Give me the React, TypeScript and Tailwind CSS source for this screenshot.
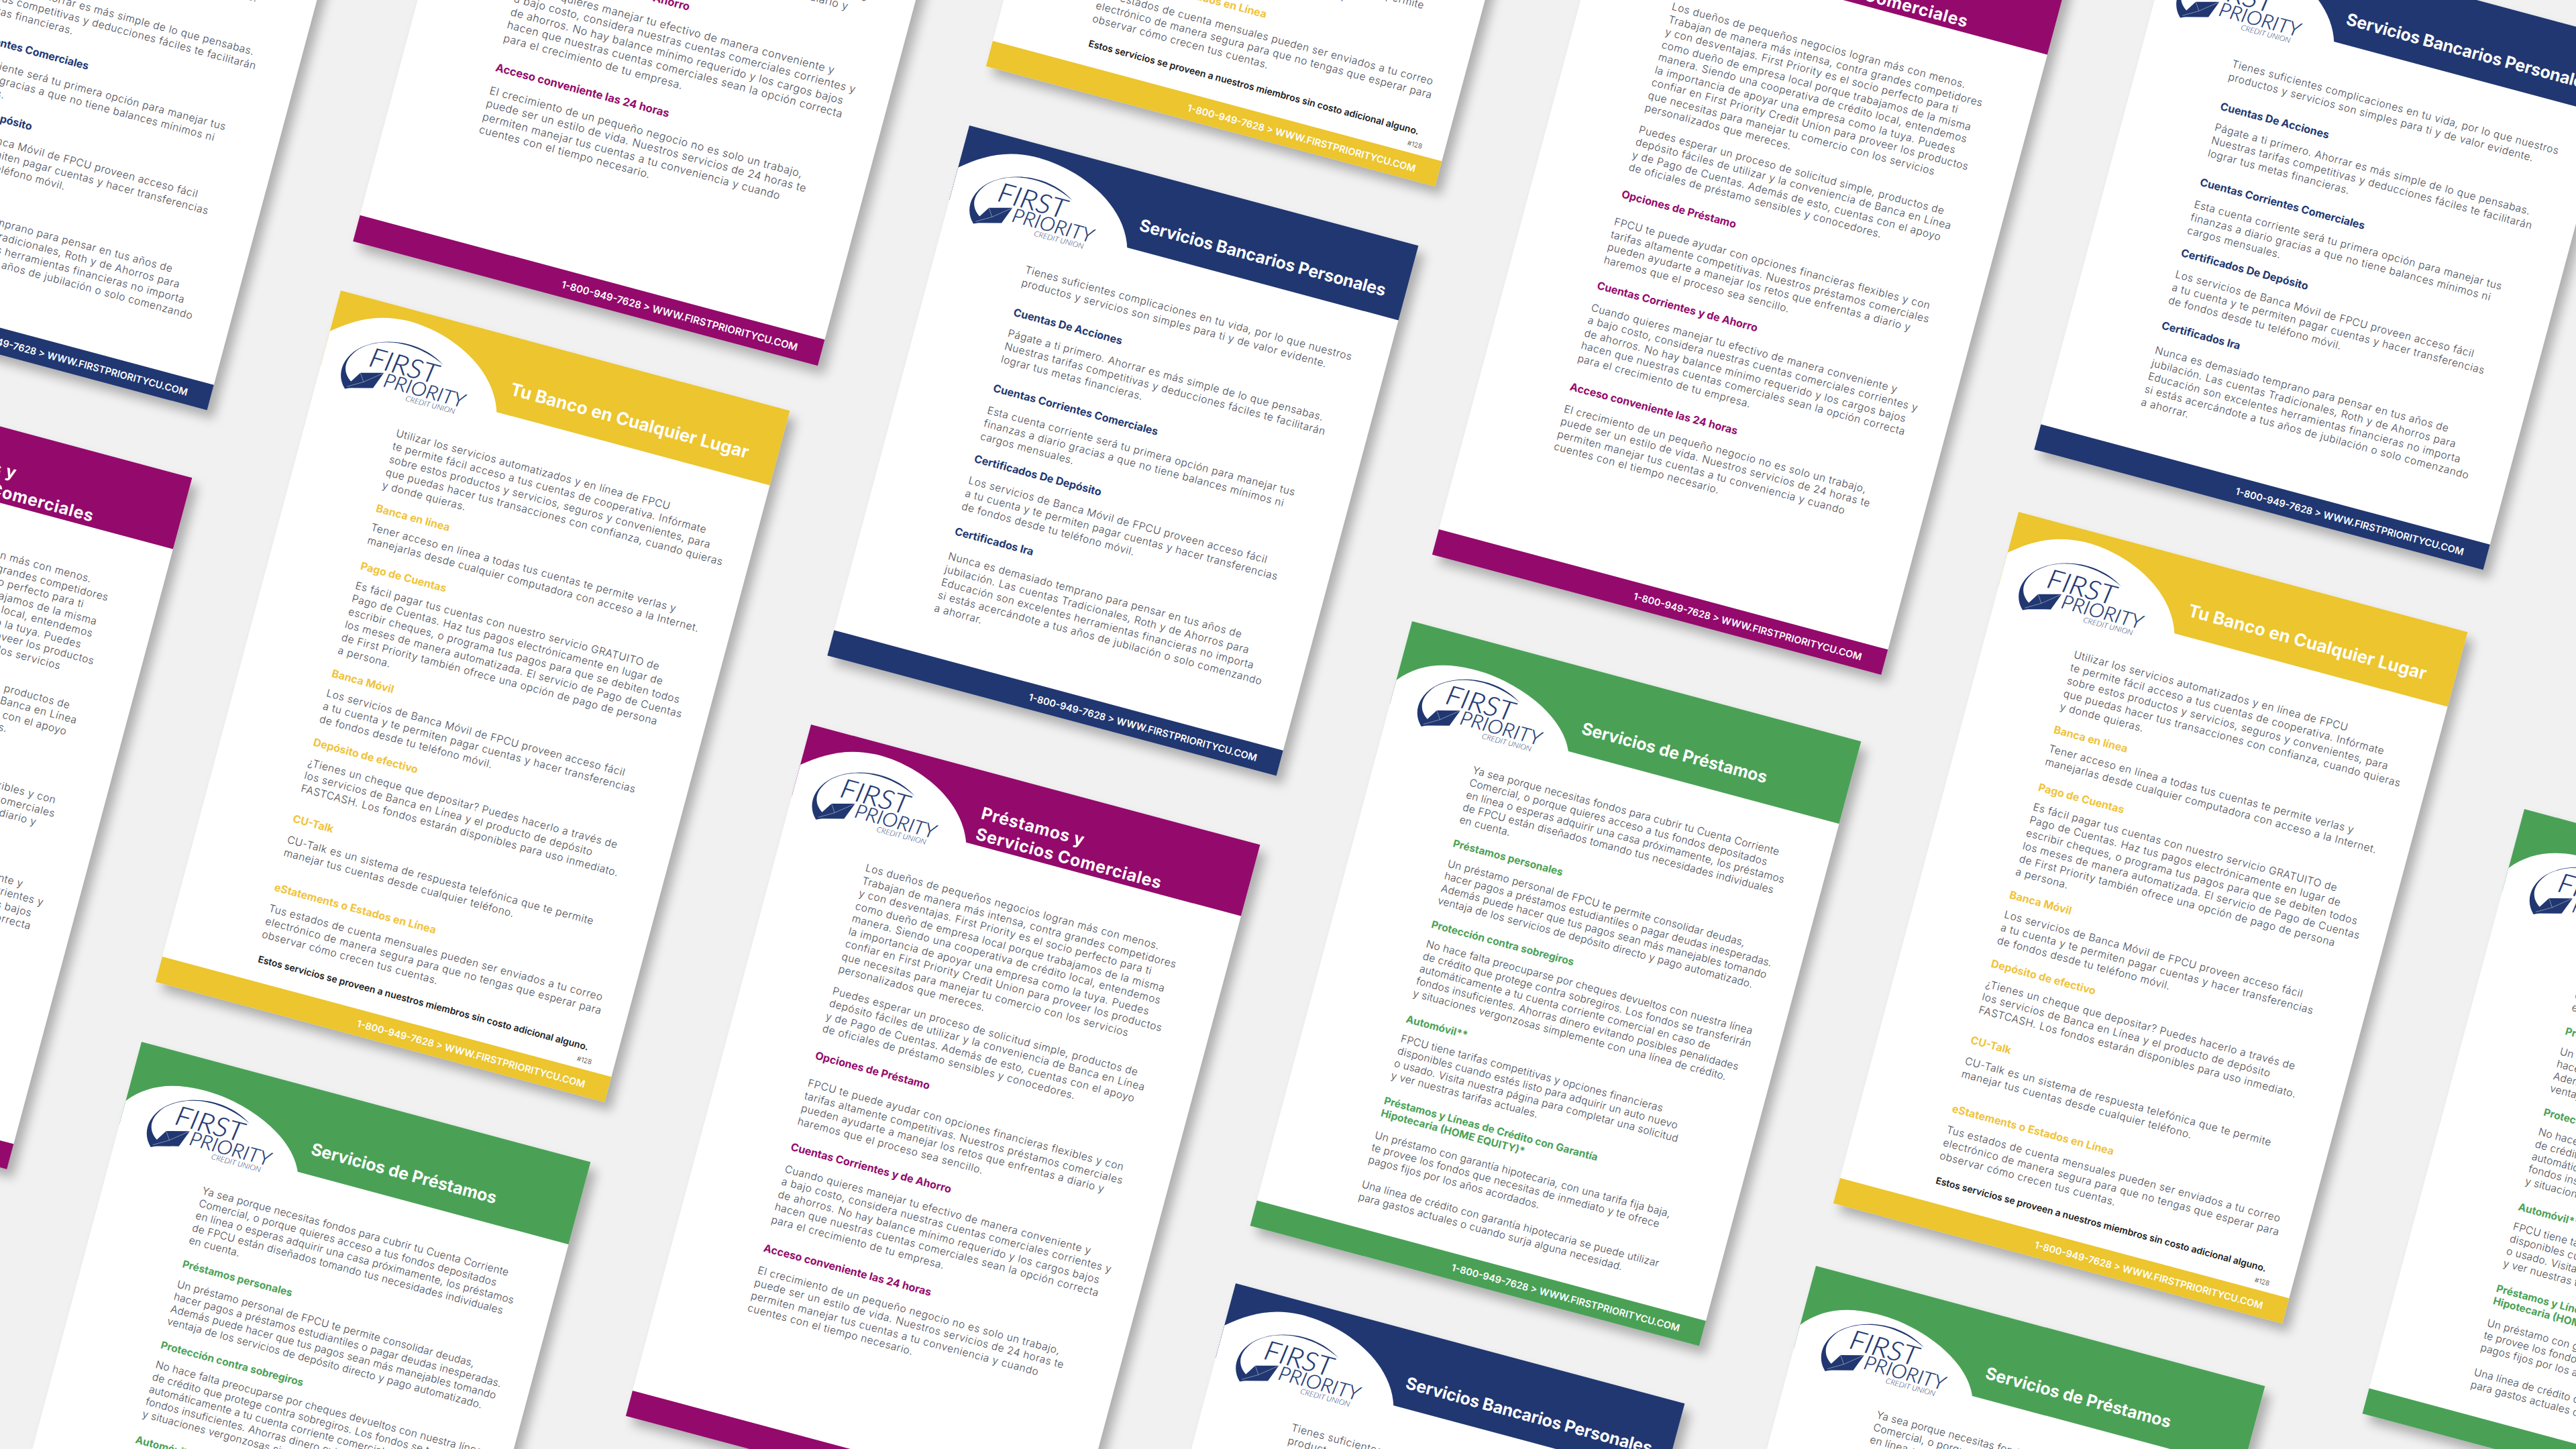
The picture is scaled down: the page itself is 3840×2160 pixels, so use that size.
import clsx from "clsx";

type Section = {
  heading?: string[];
  headingTop?: string;
  bodyTop?: string;
  lines: string[];
};

type Theme = {
  band: string;
  headingColor: string;
  cardHeight: string;
  headerHeight: string;
  bodyPad: string;
  bodyText: string;
  arc: string;
  arcBox: string;
  logoPos: string;
  titleBox: string;
  titleText: string;
  title: string[];
  sections: Section[];
  note?: boolean;
};

const navy: Theme = {
  band: "bg-[#213771]",
  headingColor: "text-[#213771] text-[16px]",
  cardHeight: "h-[818px]",
  headerHeight: "h-[115px]",
  bodyPad: "pl-[136px] pt-[61px]",
  bodyText: "leading-[20px] tracking-[0.5px]",
  arc: "M0 65 C30 40 60 22 105 20 C170 18 255 50 275 117 L0 117 Z",
  arcBox: "h-[117px] w-[280px]",
  logoPos: "left-0 top-0",
  titleBox: "pl-[284px] pt-[62px]",
  titleText: "text-[25px] leading-[30px] tracking-[-0.2px]",
  title: ["Servicios Bancarios Personales"],
  sections: [
    {
      lines: [
        "Tienes suficientes complicaciones en tu vida, por lo que nuestros",
        "productos y servicios son simples para ti y de valor evidente.",
      ],
    },
    {
      heading: ["Cuentas De Acciones"],
      headingTop: "mt-[25px]",
      bodyTop: "mt-[13px]",
      lines: [
        "Págate a ti primero. Ahorrar es más simple de lo que pensabas.",
        "Nuestras tarifas competitivas y deducciones fáciles te facilitarán",
        "lograr tus metas financieras.",
      ],
    },
    {
      heading: ["Cuentas Corrientes Comerciales"],
      headingTop: "mt-[24px]",
      bodyTop: "mt-[15px]",
      lines: [
        "Esta cuenta corriente será tu primera opción para manejar tus",
        "finanzas a diario gracias a que no tiene balances mínimos ni",
        "cargos mensuales.",
      ],
    },
    {
      heading: ["Certificados De Depósito"],
      headingTop: "mt-[14px]",
      bodyTop: "mt-[14px]",
      lines: [
        "Los servicios de Banca Móvil de FPCU proveen acceso fácil",
        "a tu cuenta y te permiten pagar cuentas y hacer transferencias",
        "de fondos desde tu teléfono móvil.",
      ],
    },
    {
      heading: ["Certificados Ira"],
      headingTop: "mt-[18px]",
      bodyTop: "mt-[19px]",
      lines: [
        "Nunca es demasiado temprano para pensar en tus años de",
        "jubilación. Las cuentas Tradicionales, Roth y de Ahorros para",
        "Educación son excelentes herramientas financieras no importa",
        "si estás acercándote a tus años de jubilación o solo comenzando",
        "a ahorrar.",
      ],
    },
  ],
};

const yellow: Theme = {
  band: "bg-[#ecc52f]",
  headingColor: "text-[#f0c33b] text-[16px]",
  cardHeight: "h-[1067px]",
  headerHeight: "h-[115px]",
  bodyPad: "pl-[135px] pt-[59px]",
  bodyText: "leading-[20px] tracking-[0.5px]",
  arc: "M0 63 C30 38 60 20 105 18 C170 16 252 50 272 117 L0 117 Z",
  arcBox: "h-[117px] w-[280px]",
  logoPos: "left-0 top-0",
  titleBox: "pl-[283px] pt-[60px]",
  titleText: "text-[26px] leading-[32px] tracking-[0.1px]",
  title: ["Tu Banco en Cualquier Lugar"],
  note: true,
  sections: [
    {
      lines: [
        "Utilizar los servicios automatizados y en línea de FPCU",
        "te permite fácil acceso a tus cuentas de cooperativa. Infórmate",
        "sobre estos productos y servicios, seguros y convenientes, para",
        "que puedas hacer tus transacciones con confianza, cuando quieras",
        "y donde quieras.",
      ],
    },
    {
      heading: ["Banca en línea"],
      headingTop: "mt-[15px]",
      bodyTop: "mt-[10px]",
      lines: [
        "Tener acceso en línea a todas tus cuentas te permite verlas y",
        "manejarlas desde cualquier computadora con acceso a la Internet.",
      ],
    },
    {
      heading: ["Pago de Cuentas"],
      headingTop: "mt-[19px]",
      bodyTop: "mt-[11px]",
      lines: [
        "Es fácil pagar tus cuentas con nuestro servicio GRATUITO de",
        "Pago de Cuentas. Haz tus pagos electrónicamente en lugar de",
        "escribir cheques, o programa tus pagos para que se debiten todos",
        "los meses de manera automatizada. El servicio de Pago de Cuentas",
        "de First Priority también ofrece una opción de pago de persona",
        "a persona.",
      ],
    },
    {
      heading: ["Banca Móvil"],
      headingTop: "mt-[15px]",
      bodyTop: "mt-[11px]",
      lines: [
        "Los servicios de Banca Móvil de FPCU proveen acceso fácil",
        "a tu cuenta y te permiten pagar cuentas y hacer transferencias",
        "de fondos desde tu teléfono móvil.",
      ],
    },
    {
      heading: ["Depósito de efectivo"],
      headingTop: "mt-[15px]",
      bodyTop: "mt-[12px]",
      lines: [
        "¿Tienes un cheque que depositar? Puedes hacerlo a través de",
        "los servicios de Banca en Línea y el producto de depósito",
        "FASTCASH. Los fondos estarán disponibles para uso inmediato.",
      ],
    },
    {
      heading: ["CU-Talk"],
      headingTop: "mt-[26px]",
      bodyTop: "mt-[13px]",
      lines: [
        "CU-Talk es un sistema de respuesta telefónica que te permite",
        "manejar tus cuentas desde cualquier teléfono.",
      ],
    },
    {
      heading: ["eStatements o Estados en Línea"],
      headingTop: "mt-[33px]",
      bodyTop: "mt-[13px]",
      lines: [
        "Tus estados de cuenta mensuales pueden ser enviados a tu correo",
        "electrónico de manera segura para que no tengas que esperar para",
        "observar cómo crecen tus cuentas.",
      ],
    },
  ],
};

const magenta: Theme = {
  band: "bg-[#930a6c]",
  headingColor: "text-[#930a6c] text-[16px]",
  cardHeight: "h-[1067px]",
  headerHeight: "h-[110px]",
  bodyPad: "pl-[134px] pt-[65px]",
  bodyText: "leading-[19.5px] tracking-[0.5px]",
  arc: "M0 62 C30 38 60 20 105 18 C170 16 252 50 271 117 L0 117 Z",
  arcBox: "h-[117px] w-[280px]",
  logoPos: "left-0 top-[-5px]",
  titleBox: "pl-[280px] pt-[45px]",
  titleText: "text-[25px] leading-[32px] tracking-[0.6px]",
  title: ["Préstamos y", "Servicios Comerciales"],
  sections: [
    {
      lines: [
        "Los dueños de pequeños negocios logran más con menos.",
        "Trabajan de manera más intensa, contra grandes competidores",
        "y con desventajas. First Priority es el socio perfecto para ti",
        "como dueño de empresa local porque trabajamos de la misma",
        "manera. Siendo una cooperativa de crédito local, entendemos",
        "la importancia de apoyar una empresa como la tuya. Puedes",
        "confiar en First Priority Credit Union para proveer los productos",
        "que necesitas para manejar tu comercio con los servicios",
        "personalizados que mereces.",
      ],
    },
    {
      bodyTop: "mt-[14px]",
      lines: [
        "Puedes esperar un proceso de solicitud simple, productos de",
        "depósito fáciles de utilizar y la conveniencia de Banca en Línea",
        "y de Pago de Cuentas. Además de esto, cuentas con el apoyo",
        "de oficiales de préstamo sensibles y conocedores.",
      ],
    },
    {
      heading: ["Opciones de Préstamo"],
      headingTop: "mt-[22px]",
      bodyTop: "mt-[23px]",
      lines: [
        "FPCU te puede ayudar con opciones financieras flexibles y con",
        "tarifas altamente competitivas. Nuestros préstamos comerciales",
        "pueden ayudarte a manejar los retos que enfrentas a diario y",
        "haremos que el proceso sea sencillo.",
      ],
    },
    {
      heading: ["Cuentas Corrientes y de Ahorro"],
      headingTop: "mt-[21px]",
      bodyTop: "mt-[14px]",
      lines: [
        "Cuando quieres manejar tu efectivo de manera conveniente y",
        "a bajo costo, considera nuestras cuentas comerciales corrientes y",
        "de ahorros. No hay balance mínimo requerido y los cargos bajos",
        "hacen que nuestras cuentas comerciales sean la opción correcta",
        "para el crecimiento de tu empresa.",
      ],
    },
    {
      heading: ["Acceso conveniente las 24 horas"],
      headingTop: "mt-[25px]",
      bodyTop: "mt-[14px]",
      lines: [
        "El crecimiento de un pequeño negocio no es solo un trabajo,",
        "puede ser un estilo de vida. Nuestros servicios de 24 horas te",
        "permiten manejar tus cuentas a tu conveniencia y cuando",
        "cuentes con el tiempo necesario.",
      ],
    },
  ],
};

const green: Theme = {
  band: "bg-[#4aa156]",
  headingColor: "text-[#4aa156] text-[15.5px]",
  cardHeight: "h-[933px]",
  headerHeight: "h-[127px]",
  bodyPad: "pl-[145px] pt-[54px]",
  bodyText: "leading-[19px] tracking-[0.22px]",
  arc: "M0 91 C25 60 60 47 105 46 C170 44 255 75 276 129 L0 129 Z",
  arcBox: "h-[129px] w-[280px]",
  logoPos: "left-[10px] top-[8px]",
  titleBox: "pl-[286px] pt-[73px]",
  titleText: "text-[25px] leading-[30px] tracking-[-0.1px]",
  title: ["Servicios de Préstamos"],
  sections: [
    {
      lines: [
        "Ya sea porque necesitas fondos para cubrir tu Cuenta Corriente",
        "Comercial, o porque quieres acceso a tus fondos depositados",
        "en línea o esperas adquirir una casa próximamente, los préstamos",
        "de FPCU están diseñados tomando tus necesidades individuales",
        "en cuenta.",
      ],
    },
    {
      heading: ["Préstamos personales"],
      headingTop: "mt-[18px]",
      bodyTop: "mt-[12px]",
      lines: [
        "Un préstamo personal de FPCU te permite consolidar deudas,",
        "hacer pagos a préstamos estudiantiles o pagar deudas inesperadas.",
        "Además puede hacer que tus pagos sean más manejables tomando",
        "ventaja de los servicios de depósito directo y pago automatizado.",
      ],
    },
    {
      heading: ["Protección contra sobregiros"],
      headingTop: "mt-[18px]",
      bodyTop: "mt-[11px]",
      lines: [
        "No hace falta preocuparse por cheques devueltos con nuestra línea",
        "de crédito que protege contra sobregiros. Los fondos se transferirán",
        "automáticamente a tu cuenta corriente comercial en caso de",
        "fondos insuficientes. Ahorras dinero evitando posibles penalidades",
        "y situaciones vergonzosas simplemente con una línea de crédito.",
      ],
    },
    {
      heading: ["Automóvil**"],
      headingTop: "mt-[21px]",
      bodyTop: "mt-[11px]",
      lines: [
        "FPCU tiene tarifas competitivas y opciones financieras",
        "disponibles cuando estés listo para adquirir un auto nuevo",
        "o usado. Visita nuestra página para completar una solicitud",
        "y ver nuestras tarifas actuales.",
      ],
    },
    {
      heading: ["Préstamos y Líneas de Crédito con Garantía", "Hipotecaria (HOME EQUITY)*"],
      headingTop: "mt-[20px]",
      bodyTop: "mt-[15px]",
      lines: [
        "Un préstamo con garantía hipotecaria, con una tarifa fija baja,",
        "te provee los fondos que necesitas de inmediato y te ofrece",
        "pagos fijos por los años acordados.",
      ],
    },
    {
      bodyTop: "mt-[19px]",
      lines: [
        "Una línea de crédito con garantía hipotecaria se puede utilizar",
        "para gastos actuales o cuando surja alguna necesidad.",
      ],
    },
  ],
};

const sheets = [
  { id: "navy-left", theme: navy, left: -149, top: -358 },
  { id: "magenta-top", theme: magenta, left: 812, top: -707, size: "scale-[1.035]" },
  { id: "yellow-top", theme: yellow, left: 1746, top: -932 },
  { id: "magenta-right", theme: magenta, left: 2411, top: -204 },
  { id: "navy-right", theme: navy, left: 3244, top: -120 },
  { id: "magenta-left", theme: magenta, left: -383, top: 533 },
  { id: "yellow-main", theme: yellow, left: 508, top: 433 },
  { id: "navy-main", theme: navy, left: 1445, top: 187 },
  { id: "green-main", theme: green, left: 2105, top: 926 },
  { id: "yellow-right", theme: yellow, left: 3009, top: 763 },
  { id: "magenta-main", theme: magenta, left: 1209, top: 1080 },
  { id: "green-left", theme: green, left: 211, top: 1553 },
  { id: "navy-bottom", theme: navy, left: 1842, top: 1913 },
  { id: "green-bottom", theme: green, left: 2707, top: 1887 },
  { id: "green-far", theme: green, left: 3763, top: 1206 },
];

function Logo({ className }: { className: string }) {
  return (
    <svg className={clsx("absolute", className)} width="260" height="150" viewBox="0 0 260 150">
      {/* swoosh */}
      <path
        d="M44 140 C28 126 26 100 47 78 C75 50 135 40 177 68 C135 47 80 47 48 78 C29 100 33 122 60 132 Z"
        fill="#213771"
      />
      {/* paper boat */}
      <path d="M42 139 L60 111 L94 102 L84 128 Z" fill="#213771" />
      <path d="M60 111 L68 123 L94 102 M68 123 L46 136" stroke="#fff" strokeWidth="0.4" fill="none" />
      <g fill="#213771" stroke="#213771" strokeWidth="0.3" fontFamily="Lato, sans-serif" fontStyle="italic" fontWeight="300">
        <text x="68" y="98" fontSize="40" textLength="104" lengthAdjust="spacingAndGlyphs">
          FIRST
        </text>
        <text x="97" y="122" fontSize="29" textLength="124" lengthAdjust="spacingAndGlyphs">
          PRIORITY
        </text>
        <text x="135" y="134" fontSize="11" strokeWidth="0" textLength="76" lengthAdjust="spacingAndGlyphs">
          CREDIT UNION
        </text>
      </g>
    </svg>
  );
}

function Sheet({ theme }: { theme: Theme }) {
  return (
    <div
      className={clsx(
        "flex w-[693px] flex-col bg-white font-['Inter',sans-serif] shadow-[12px_10px_16px_rgba(0,0,0,0.28)]",
        theme.cardHeight,
      )}
    >
      <div className={clsx("relative shrink-0", theme.band, theme.headerHeight, theme.titleBox)}>
        <svg className={clsx("absolute left-0 top-0", theme.arcBox)}>
          <path d={theme.arc} fill="#fff" />
        </svg>
        <Logo className={theme.logoPos} />
        <h2 className={clsx("relative whitespace-nowrap font-bold text-white", theme.titleText)}>
          {theme.title.map((line) => (
            <div key={line}>{line}</div>
          ))}
        </h2>
      </div>

      <div className={clsx("flex-1 text-[15.5px] font-light text-[#4a4c55]", theme.bodyPad, theme.bodyText)}>
        {theme.sections.map((section) => (
          <section key={section.lines[0]}>
            {section.heading && (
              <h3 className={clsx("whitespace-nowrap font-bold tracking-normal", section.headingTop, theme.headingColor)}>
                {section.heading.map((line) => (
                  <div key={line}>{line}</div>
                ))}
              </h3>
            )}
            <p className={clsx("whitespace-nowrap", section.bodyTop)}>
              {section.lines.map((line) => (
                <span key={line} className="block">
                  {line}
                </span>
              ))}
            </p>
          </section>
        ))}
        {theme.note && (
          <>
            <p className="ml-[4px] mt-[17px] whitespace-nowrap text-[14px] font-semibold tracking-normal text-[#1c1c1c]">
              Estos servicios se proveen a nuestros miembros sin costo adicional alguno.
            </p>
            <p className="mt-[3px] pr-[34px] text-right text-[10px] leading-[14px] tracking-normal text-[#333]">#128</p>
          </>
        )}
      </div>

      <div
        className={clsx(
          "flex h-[39px] shrink-0 items-center justify-end pr-[35px] pt-[2px] text-[14.5px] font-semibold text-white",
          theme.band,
        )}
      >
        1-800-949-7628 &gt; WWW.FIRSTPRIORITYCU.COM
      </div>
    </div>
  );
}

export default function App() {
  return (
    <div className="relative h-[2160px] w-[3840px] overflow-hidden bg-[#f1f1f1]">
      {sheets.map((sheet) => (
        <div
          key={sheet.id}
          className={clsx("absolute origin-top-left rotate-[15deg]", sheet.size)}
          style={{ left: sheet.left, top: sheet.top }}
        >
          <Sheet theme={sheet.theme} />
        </div>
      ))}
    </div>
  );
}
